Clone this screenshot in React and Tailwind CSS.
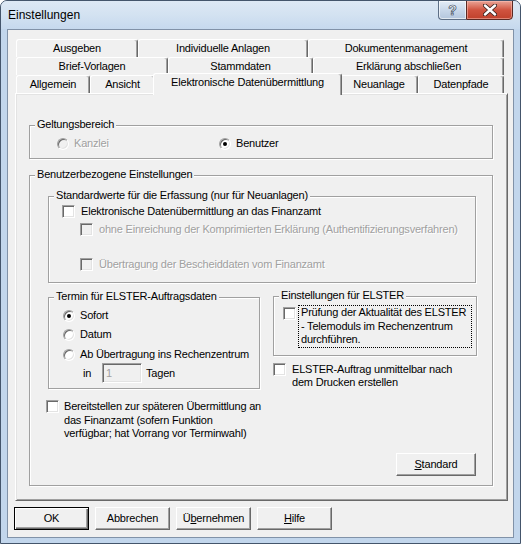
import React from "react";

const font = "font-['Liberation_Sans',Arial,sans-serif]";
const disabledText = "text-[#a0a0a0] [text-shadow:1px_1px_0_#fff]";

function Check({ disabled }) {
  return (
    <span
      className={`inline-block w-[13px] h-[13px] shrink-0 border border-t-[#a0a0a0] border-l-[#a0a0a0] border-r-white border-b-white shadow-[inset_1px_1px_0_#696969,inset_-1px_-1px_0_#e3e3e3] ${
        disabled ? "bg-[#f0f0f0]" : "bg-white"
      }`}
    />
  );
}

function Radio({ checked, disabled }) {
  return (
    <span
      className={`flex items-center justify-center w-[12px] h-[12px] shrink-0 rounded-full border border-t-[#a0a0a0] border-l-[#a0a0a0] border-r-white border-b-white shadow-[inset_1px_1px_0_#696969,inset_-1px_-1px_0_#e3e3e3] ${
        disabled ? "bg-[#f0f0f0]" : "bg-white"
      }`}
    >
      {checked && <span className="w-[4px] h-[4px] rounded-full bg-black" />}
    </span>
  );
}

// classic etched group box, label sits over the top line
function Group({ label, className, children }) {
  return (
    <div
      className={`relative border border-[#a0a0a0] shadow-[inset_1px_1px_0_#fff,1px_1px_0_#fff] ${className}`}
    >
      <span className="absolute -top-[8px] left-[5px] px-[2px] bg-[#f0f0f0] leading-[13px] whitespace-nowrap">
        {label}
      </span>
      {children}
    </div>
  );
}

function Tab({ className, children }) {
  return (
    <div
      className={`h-[18px] shrink-0 flex items-center justify-center leading-[13px] bg-[#f0f0f0] rounded-t-[3px] border-t border-l border-r border-t-white border-l-white border-r-[#696969] shadow-[inset_-1px_0_0_#a0a0a0] ${className}`}
    >
      {children}
    </div>
  );
}

function Button({ className, isDefault, children }) {
  return (
    <button
      className={`h-[23px] flex items-center justify-center bg-[#f0f0f0] leading-[13px] ${
        isDefault
          ? "border border-black shadow-[inset_1px_1px_0_#fff,inset_-1px_-1px_0_#696969,inset_-2px_-2px_0_#a0a0a0]"
          : "border border-t-white border-l-white border-r-[#696969] border-b-[#696969] shadow-[inset_-1px_-1px_0_#a0a0a0]"
      } ${className}`}
    >
      {children}
    </button>
  );
}

export default function App() {
  return (
    <div className={`w-[521px] h-[544px] ${font} text-[11px] tracking-[-0.2px] text-black`}>
      <div className="w-[521px] h-[544px] flex flex-col rounded-t-[7px] overflow-hidden border border-[#44556b] bg-[#c2d6ec]">
        {/* Title bar */}
        <div className="h-[28px] shrink-0 flex items-start justify-between pl-[7px] pr-[7px] bg-gradient-to-b from-[#dde8f4] via-[#d3e2f1] to-[#c6d9ee]">
          <span className="self-center text-[12px] tracking-normal leading-[15px] pt-[1px]">Einstellungen</span>
          <div className="flex h-[20px] -mt-[1px]">
            <div className="w-[28px] h-[20px] flex items-center justify-center rounded-bl-[4px] border border-r-0 border-[#5d6f86] bg-gradient-to-b from-[#e4edf7] via-[#c9d8ea] to-[#b3c6dd] shadow-[inset_0_0_0_1px_rgba(255,255,255,0.6)]">
              <span className="text-[14px] leading-[14px] font-bold text-white [-webkit-text-stroke:0.7px_#3b4a5c]">?</span>
            </div>
            <div className="w-[47px] h-[20px] flex items-center justify-center rounded-br-[4px] border border-[#5a2a24] bg-gradient-to-b from-[#e9a396] via-[#d0533f] to-[#c0412c] shadow-[inset_0_0_0_1px_rgba(255,200,190,0.5)]">
              <svg width="14" height="12" viewBox="0 0 14 12">
                <path d="M2 1.5 L12 10.5 M12 1.5 L2 10.5" stroke="#3e2420" strokeWidth="4.2" strokeLinecap="round" />
                <path d="M2 1.5 L12 10.5 M12 1.5 L2 10.5" stroke="#fff" strokeWidth="2.4" strokeLinecap="round" />
              </svg>
            </div>
          </div>
        </div>

        {/* Client area */}
        <div className="mx-[6px] h-[509px] shrink-0 flex flex-col bg-[#f0f0f0] border border-[#8192a8] pt-[9px]">
          {/* Tab rows */}
          <div className="ml-[8px] flex flex-col">
            <div className="flex">
              <Tab className="w-[122px]">Ausgeben</Tab>
              <Tab className="w-[170px]">Individuelle Anlagen</Tab>
              <Tab className="w-[196px]">Dokumentenmanagement</Tab>
            </div>
            <div className="flex">
              <Tab className="w-[152px]">Brief-Vorlagen</Tab>
              <Tab className="w-[145px]">Stammdaten</Tab>
              <Tab className="w-[191px]">Erklärung abschließen</Tab>
            </div>
            <div className="flex h-[18px] items-start">
              <Tab className="w-[74px]">Allgemein</Tab>
              <Tab className="w-[65px]">Ansicht</Tab>
              <div className="relative z-10 -mx-[2px] -mt-[2px] w-[189px] h-[22px] shrink-0 flex justify-center pt-[2px] leading-[13px] bg-[#f0f0f0] rounded-t-[3px] border-t border-l border-r border-t-white border-l-white border-r-[#696969] shadow-[inset_-1px_0_0_#a0a0a0]">
                Elektronische Datenübermittlung
              </div>
              <Tab className="w-[78px]">Neuanlage</Tab>
              <Tab className="w-[86px]">Datenpfade</Tab>
            </div>
          </div>

          {/* Tab panel */}
          <div className="ml-[7px] w-[493px] h-[408px] shrink-0 flex flex-col pt-[31px] pl-[13px] border border-t-white border-l-white border-r-[#696969] border-b-[#696969] shadow-[inset_1px_1px_0_#e3e3e3,inset_-1px_-1px_0_#a0a0a0]">
            <Group label="Geltungsbereich" className="w-[464px] h-[34px] shrink-0 flex items-start pt-[11px] pl-[27px]">
              <div className={`w-[162px] flex items-center gap-[5px] leading-[13px] ${disabledText}`}>
                <Radio disabled />
                <span>Kanzlei</span>
              </div>
              <div className="flex items-center gap-[5px] leading-[13px]">
                <Radio checked />
                <span>Benutzer</span>
              </div>
            </Group>

            <Group label="Benutzerbezogene Einstellungen" className="mt-[16px] w-[464px] h-[311px] shrink-0 flex flex-col">
              <Group
                label="Standardwerte für die Erfassung (nur für Neuanlagen)"
                className="mt-[20px] ml-[18px] w-[428px] h-[87px] shrink-0 pt-[8px] pl-[13px]"
              >
                <div className="flex items-start gap-[6px] leading-[13px]">
                  <Check />
                  <span className="whitespace-nowrap">Elektronische Datenübermittlung an das Finanzamt</span>
                </div>
                <div className={`mt-[5px] ml-[18px] flex items-start gap-[6px] leading-[13px] ${disabledText}`}>
                  <Check disabled />
                  <span className="whitespace-nowrap">ohne Einreichung der Komprimierten Erklärung (Authentifizierungsverfahren)</span>
                </div>
                <div className={`mt-[22px] ml-[18px] flex items-start gap-[6px] leading-[13px] ${disabledText}`}>
                  <Check disabled />
                  <span className="whitespace-nowrap">Übertragung der Bescheiddaten vom Finanzamt</span>
                </div>
              </Group>

              <div className="mt-[13px] flex items-start">
                <Group
                  label="Termin für ELSTER-Auftragsdaten"
                  className="mt-[1px] ml-[18px] w-[212px] h-[92px] shrink-0 pt-[11px] pl-[14px]"
                >
                  <div className="flex items-center gap-[5px] h-[13px] leading-[13px]">
                    <Radio checked />
                    <span>Sofort</span>
                  </div>
                  <div className="mt-[6px] flex items-center gap-[5px] h-[13px] leading-[13px]">
                    <Radio />
                    <span>Datum</span>
                  </div>
                  <div className="mt-[7px] flex items-center gap-[5px] h-[13px] leading-[13px]">
                    <Radio />
                    <span className="whitespace-nowrap">Ab Übertragung ins Rechenzentrum</span>
                  </div>
                  <div className="mt-[2px] flex items-center h-[20px] leading-[13px]">
                    <span className="w-[39px] pl-[20px]">in</span>
                    <span className="w-[40px] h-[20px] flex items-center pl-[3px] text-[#a0a0a0] bg-[#f0f0f0] border border-t-[#a0a0a0] border-l-[#a0a0a0] border-r-white border-b-white shadow-[inset_1px_1px_0_#696969,inset_-1px_-1px_0_#e3e3e3]">
                      1
                    </span>
                    <span className="ml-[4px]">Tagen</span>
                  </div>
                </Group>

                <div className="ml-[13px] w-[204px] flex flex-col">
                  <Group label="Einstellungen für ELSTER" className="h-[60px] pt-[8px] pl-[9px]">
                    <div className="flex items-start">
                      <span className="mt-[2px] flex">
                        <Check />
                      </span>
                      <span className="ml-[2px] w-[174px] px-[2px] leading-[13.5px] whitespace-nowrap border border-dotted border-black">
                        Prüfung der Aktualität des ELSTER
                        <br />- Telemoduls im Rechenzentrum
                        <br />
                        durchführen.
                      </span>
                    </div>
                  </Group>
                  <div className="mt-[7px] flex items-start gap-[6px] leading-[13px]">
                    <Check />
                    <span className="whitespace-nowrap">
                      ELSTER-Auftrag unmittelbar nach
                      <br />
                      dem Drucken erstellen
                    </span>
                  </div>
                </div>
              </div>

              <div className="mt-[11px] ml-[16px] flex items-start gap-[5px] leading-[13.5px]">
                <Check />
                <span className="whitespace-nowrap">
                  Bereitstellen zur späteren Übermittlung an
                  <br />
                  das Finanzamt (sofern Funktion
                  <br />
                  verfügbar; hat Vorrang vor Terminwahl)
                </span>
              </div>

              <Button className="mt-auto mb-[9px] mr-[16px] self-end w-[80px]">
                <span>
                  <u>S</u>tandard
                </span>
              </Button>
            </Group>
          </div>

          {/* Dialog buttons */}
          <div className="mt-[6px] ml-[6px] flex gap-[6px]">
            <Button isDefault className="w-[75px]">OK</Button>
            <Button className="w-[75px]">Abbrechen</Button>
            <Button className="w-[75px]">
              <span>
                Ü<u>b</u>ernehmen
              </span>
            </Button>
            <Button className="w-[75px]">
              <span>
                <u>H</u>ilfe
              </span>
            </Button>
          </div>
        </div>
      </div>
    </div>
  );
}
